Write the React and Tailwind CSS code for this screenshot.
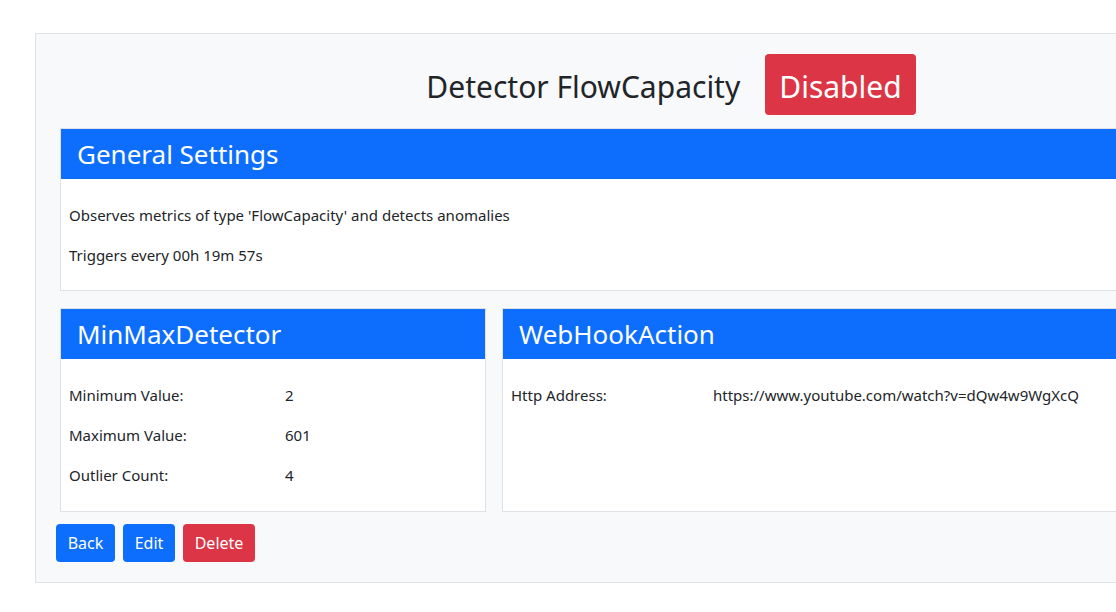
import React from "react";

const Card = ({ title, className = "", children }) => (
  <div className={"bg-white border border-[#dee2e6] " + className}>
    <div className="bg-[#0d6efd] text-white h-[50px] flex items-center px-4 text-[26px]">
      {title}
    </div>
    <div className="px-2 pt-[24px] pb-1">{children}</div>
  </div>
);

const Row = ({ label, value, labelWidth }) => (
  <div className="flex h-[40px] items-start">
    <span className={labelWidth}>{label}</span>
    <span>{value}</span>
  </div>
);

export default function App() {
  return (
    <div
      className="w-[1116px] h-[612px] overflow-hidden bg-white text-[#212529] text-[15px] leading-[24px]"
      style={{ fontFamily: '"Noto Sans", sans-serif' }}
    >
      <div className="ml-[35px] mt-[33px] w-[1272px] h-[550px] bg-[#f8f9fa] border border-[#dee2e6] px-6 pt-5">
        {/* title */}
        <div className="flex justify-center items-center gap-[25px] h-[61px]">
          <h2 className="text-[30px] mt-1">Detector FlowCapacity</h2>
          <span className="bg-[#dc3545] text-white text-[30px] rounded-[4px] h-[61px] px-[14px] pt-1 flex items-center">
            Disabled
          </span>
        </div>

        {/* general settings */}
        <Card title="General Settings" className="mt-[13px] h-[163px]">
          <p className="h-[40px]">
            Observes metrics of type 'FlowCapacity' and detects anomalies
          </p>
          <p>Triggers every 00h 19m 57s</p>
        </Card>

        <div className="flex gap-4 mt-[17px]">
          <Card title="MinMaxDetector" className="w-[426px] h-[204px]">
            <Row label="Minimum Value:" value="2" labelWidth="w-[216px]" />
            <Row label="Maximum Value:" value="601" labelWidth="w-[216px]" />
            <Row label="Outlier Count:" value="4" labelWidth="w-[216px]" />
          </Card>
          <Card title="WebHookAction" className="flex-1 h-[204px]">
            <Row
              label="Http Address:"
              value="https://www.youtube.com/watch?v=dQw4w9WgXcQ"
              labelWidth="w-[202px]"
            />
          </Card>
        </div>

        {/* actions */}
        <div className="flex gap-2 mt-3 -ml-1 text-[16px]">
          <button className="bg-[#0d6efd] text-white rounded-[4px] h-[38px] w-[59px]">Back</button>
          <button className="bg-[#0d6efd] text-white rounded-[4px] h-[38px] w-[52px]">Edit</button>
          <button className="bg-[#dc3545] text-white rounded-[4px] h-[38px] w-[72px]">Delete</button>
        </div>
      </div>
    </div>
  );
}
